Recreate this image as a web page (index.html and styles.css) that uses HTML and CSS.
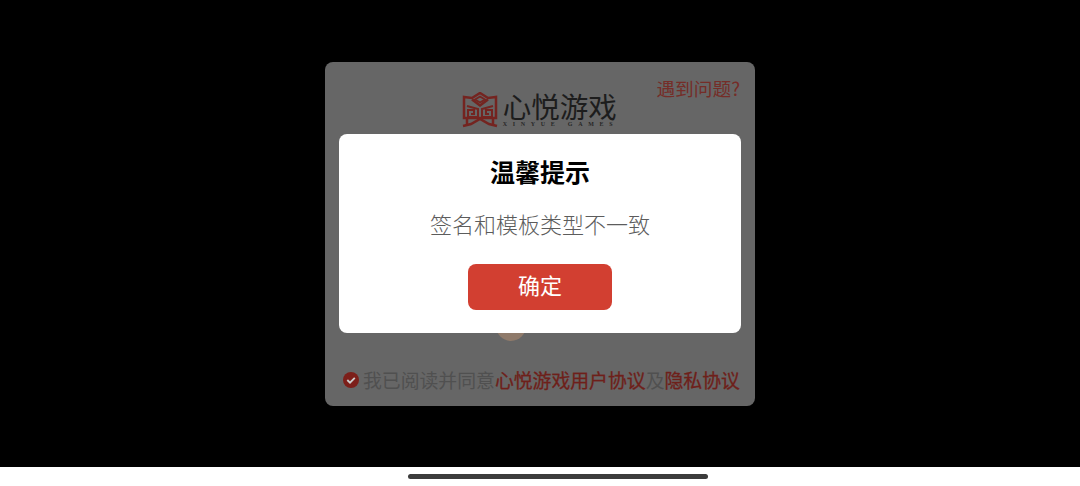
FILE: index.html
```html
<!DOCTYPE html>
<html lang="zh-CN">
  <head>
    <meta charset="UTF-8" />
    <meta name="viewport" content="width=device-width, initial-scale=1.0" />
    <title>心悦游戏</title>
    <link rel="stylesheet" href="styles.css">
  </head>
  <body>
    <main class="stage">
      <section class="login-card">
        <div class="login-head">
          <div class="logo">
            <svg class="logo-mark" width="36" height="36" viewBox="0 0 36 36" fill="none" stroke="#742420" stroke-width="2.500">
              <path d="M2 5 L10 6 L18 1 L26 6 L34 5 V26 H2 Z" />
              <path d="M10 7.500 L18 13.500 L26 7.500" />
              <path d="M13 7.500 L18 4.500 L23 7.500 L18 10.500 Z" fill="#666" stroke-width="1.800" />
              <path d="M5 14 L16 17 V25 H6 V18 H12 V22 H9" stroke-width="2" />
              <path d="M31 14 L20 17 V25 H30 V18 H24 V22 H27" stroke-width="2" />
              <path d="M1 34 L9 32 L18 27 L27 32 L35 34" />
              <path d="M5 26 V33 M31 26 V33" />
            </svg>
            <div class="logo-words">
              <span class="logo-name">心悦游戏</span>
              <span class="logo-latin">XINYUE GAMES</span>
            </div>
          </div>
          <a class="help-link">遇到问题?</a>
        </div>
        <div class="login-body">
          <div class="avatar"></div>
        </div>
        <div class="agreement">
          <svg class="check" width="16" height="16" viewBox="0 0 16 16">
            <circle cx="8" cy="8" r="8" fill="#7c1f1a" />
            <path d="M4.300 8 L7 10.700 L11.800 5.800" fill="none" stroke="#ccc" stroke-width="1.800" />
          </svg>
          <span>我已阅读并同意<b>心悦游戏用户协议</b>及<b>隐私协议</b></span>
        </div>
      </section>

      <div class="dialog">
        <h2>温馨提示</h2>
        <p>签名和模板类型不一致</p>
        <button>确定</button>
      </div>
    </main>
    <footer class="home-bar">
      <div class="home-indicator"></div>
    </footer>
  </body>
</html>
```

FILE: styles.css
```css
* {
  box-sizing: border-box;
  margin: 0;
}
html,
body {
  height: 100%;
}
body {
  display: flex;
  flex-direction: column;
  font-family: "Noto Sans CJK SC", "Liberation Sans", sans-serif;
  background-color: white;
}
.stage {
  flex: 1;
  display: grid;
  place-items: center;
  background-color: black;
}
.stage > * {
  grid-area: 1 / 1;
}
.login-card {
  width: 430px;
  height: 344px;
  display: flex;
  flex-direction: column;
  padding: 13px 15px 13px 18px;
  background-color: #666;
  border-radius: 8px;
}
.login-head {
  display: grid;
}
.login-head > * {
  grid-area: 1 / 1;
}
.logo {
  justify-self: center;
  display: flex;
  gap: 5px;
  margin-top: 17px;
  margin-left: -3px;
}
.logo-words {
  display: flex;
  flex-direction: column;
}
.logo-name {
  font-size: 28.500px;
  font-weight: 400;
  line-height: 28px;
  color: #1d1d1d;
}
.logo-latin {
  font-family: "Liberation Serif", serif;
  font-size: 6px;
  font-weight: bold;
  line-height: 8px;
  letter-spacing: 5.700px;
  color: #262626;
  white-space: nowrap;
}
.help-link {
  justify-self: end;
  font-size: 18.700px;
  line-height: 26px;
  color: #752d28;
}
.login-body {
  flex: 1;
  display: flex;
  flex-direction: column;
  justify-content: flex-end;
  align-items: center;
  padding-bottom: 26px;
}
.avatar {
  width: 30px;
  height: 30px;
  margin-right: 61px;
  border-radius: 50%;
  background-color: #8f7a6a;
}
.agreement {
  display: flex;
  align-items: center;
  gap: 4px;
  font-size: 18.850px;
  line-height: 26px;
  color: #505050;
  white-space: nowrap;
}
.agreement b {
  font-weight: 400;
  color: #6e1f1a;
  -webkit-text-stroke: 0.300px #6e1f1a;
}
.check {
  flex: none;
}
.dialog {
  width: 402px;
  height: 199px;
  display: flex;
  flex-direction: column;
  align-items: center;
  padding-top: 19px;
  background-color: white;
  border-radius: 8px;
}
.dialog h2 {
  font-size: 25px;
  font-weight: 700;
  line-height: 36px;
  color: black;
}
.dialog p {
  margin-top: 18px;
  font-size: 22px;
  font-weight: 300;
  line-height: 32px;
  color: #5c5c5c;
}
.dialog button {
  width: 144px;
  height: 46px;
  margin-top: 25px;
  padding-bottom: 7px;
  border: 0;
  border-radius: 8px;
  font-family: inherit;
  font-size: 22px;
  color: white;
  background-color: #d23f31;
}
.home-bar {
  height: 19px;
  display: flex;
  justify-content: center;
  padding-top: 7px;
}
.home-indicator {
  width: 300px;
  height: 5px;
  margin-left: 35px;
  border-radius: 3px;
  background-color: #3c3c3c;
}
```
